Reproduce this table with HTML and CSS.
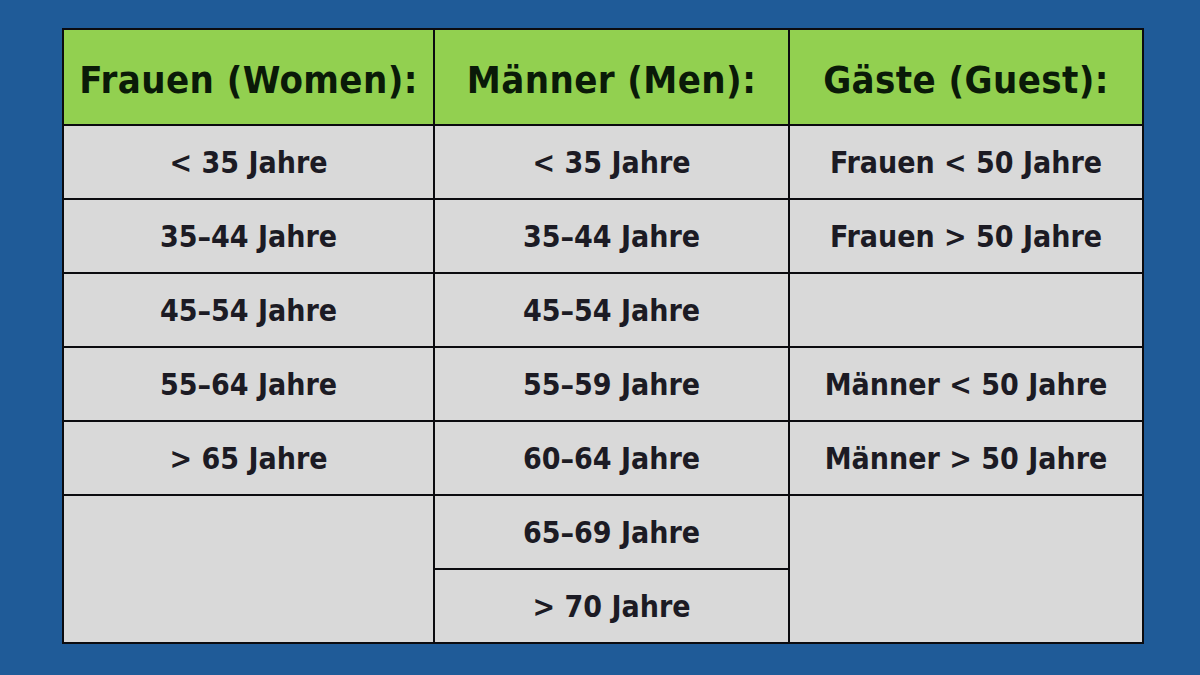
FILE: index.html
```html
<!DOCTYPE html>
<html lang="de">
<head>
<meta charset="utf-8">
<title>Altersklassen</title>
<link rel="stylesheet" href="styles.css">
</head>
<body>
<div class="page">
  <table class="classes">
    <colgroup>
      <col class="col-a">
      <col class="col-b">
      <col class="col-c">
    </colgroup>
    <thead>
      <tr>
        <th>Frauen (Women):</th>
        <th>Männer (Men):</th>
        <th>Gäste (Guest):</th>
      </tr>
    </thead>
    <tbody>
      <tr><td>&lt; 35 Jahre</td><td>&lt; 35 Jahre</td><td>Frauen &lt; 50 Jahre</td></tr>
      <tr><td>35–44 Jahre</td><td>35–44 Jahre</td><td>Frauen &gt; 50 Jahre</td></tr>
      <tr><td>45–54 Jahre</td><td>45–54 Jahre</td><td></td></tr>
      <tr><td>55–64 Jahre</td><td>55–59 Jahre</td><td>Männer &lt; 50 Jahre</td></tr>
      <tr><td>&gt; 65 Jahre</td><td>60–64 Jahre</td><td>Männer &gt; 50 Jahre</td></tr>
      <tr><td rowspan="2"></td><td>65–69 Jahre</td><td rowspan="2"></td></tr>
      <tr><td>&gt; 70 Jahre</td></tr>
    </tbody>
  </table>
</div>
</body>
</html>
```
FILE: styles.css
```css
html, body {
  margin: 0;
  padding: 0;
  background: #1f5b98;
}
.page {
  width: 1200px;
  height: 675px;
  padding: 28px 0 0 62px;
  box-sizing: border-box;
}
.classes {
  border-collapse: collapse;
  table-layout: fixed;
  width: 1080px;
  font-family: "DejaVu Sans Condensed", "DejaVu Sans", sans-serif;
  font-weight: bold;
}
.col-a { width: 371px; }
.col-b { width: 355px; }
.col-c { width: 354px; }
.classes th,
.classes td {
  border: 2px solid #0b0b0f;
  text-align: center;
  padding: 0;
}
.classes th {
  height: 88px;
  padding-top: 6px;
  background: #92d050;
  color: #0a1a08;
  font-size: 38px;
  letter-spacing: 0.4px;
}
.classes td {
  height: 72px;
  background: #d9d9d9;
  color: #1c1b24;
  font-size: 30px;
}
```
